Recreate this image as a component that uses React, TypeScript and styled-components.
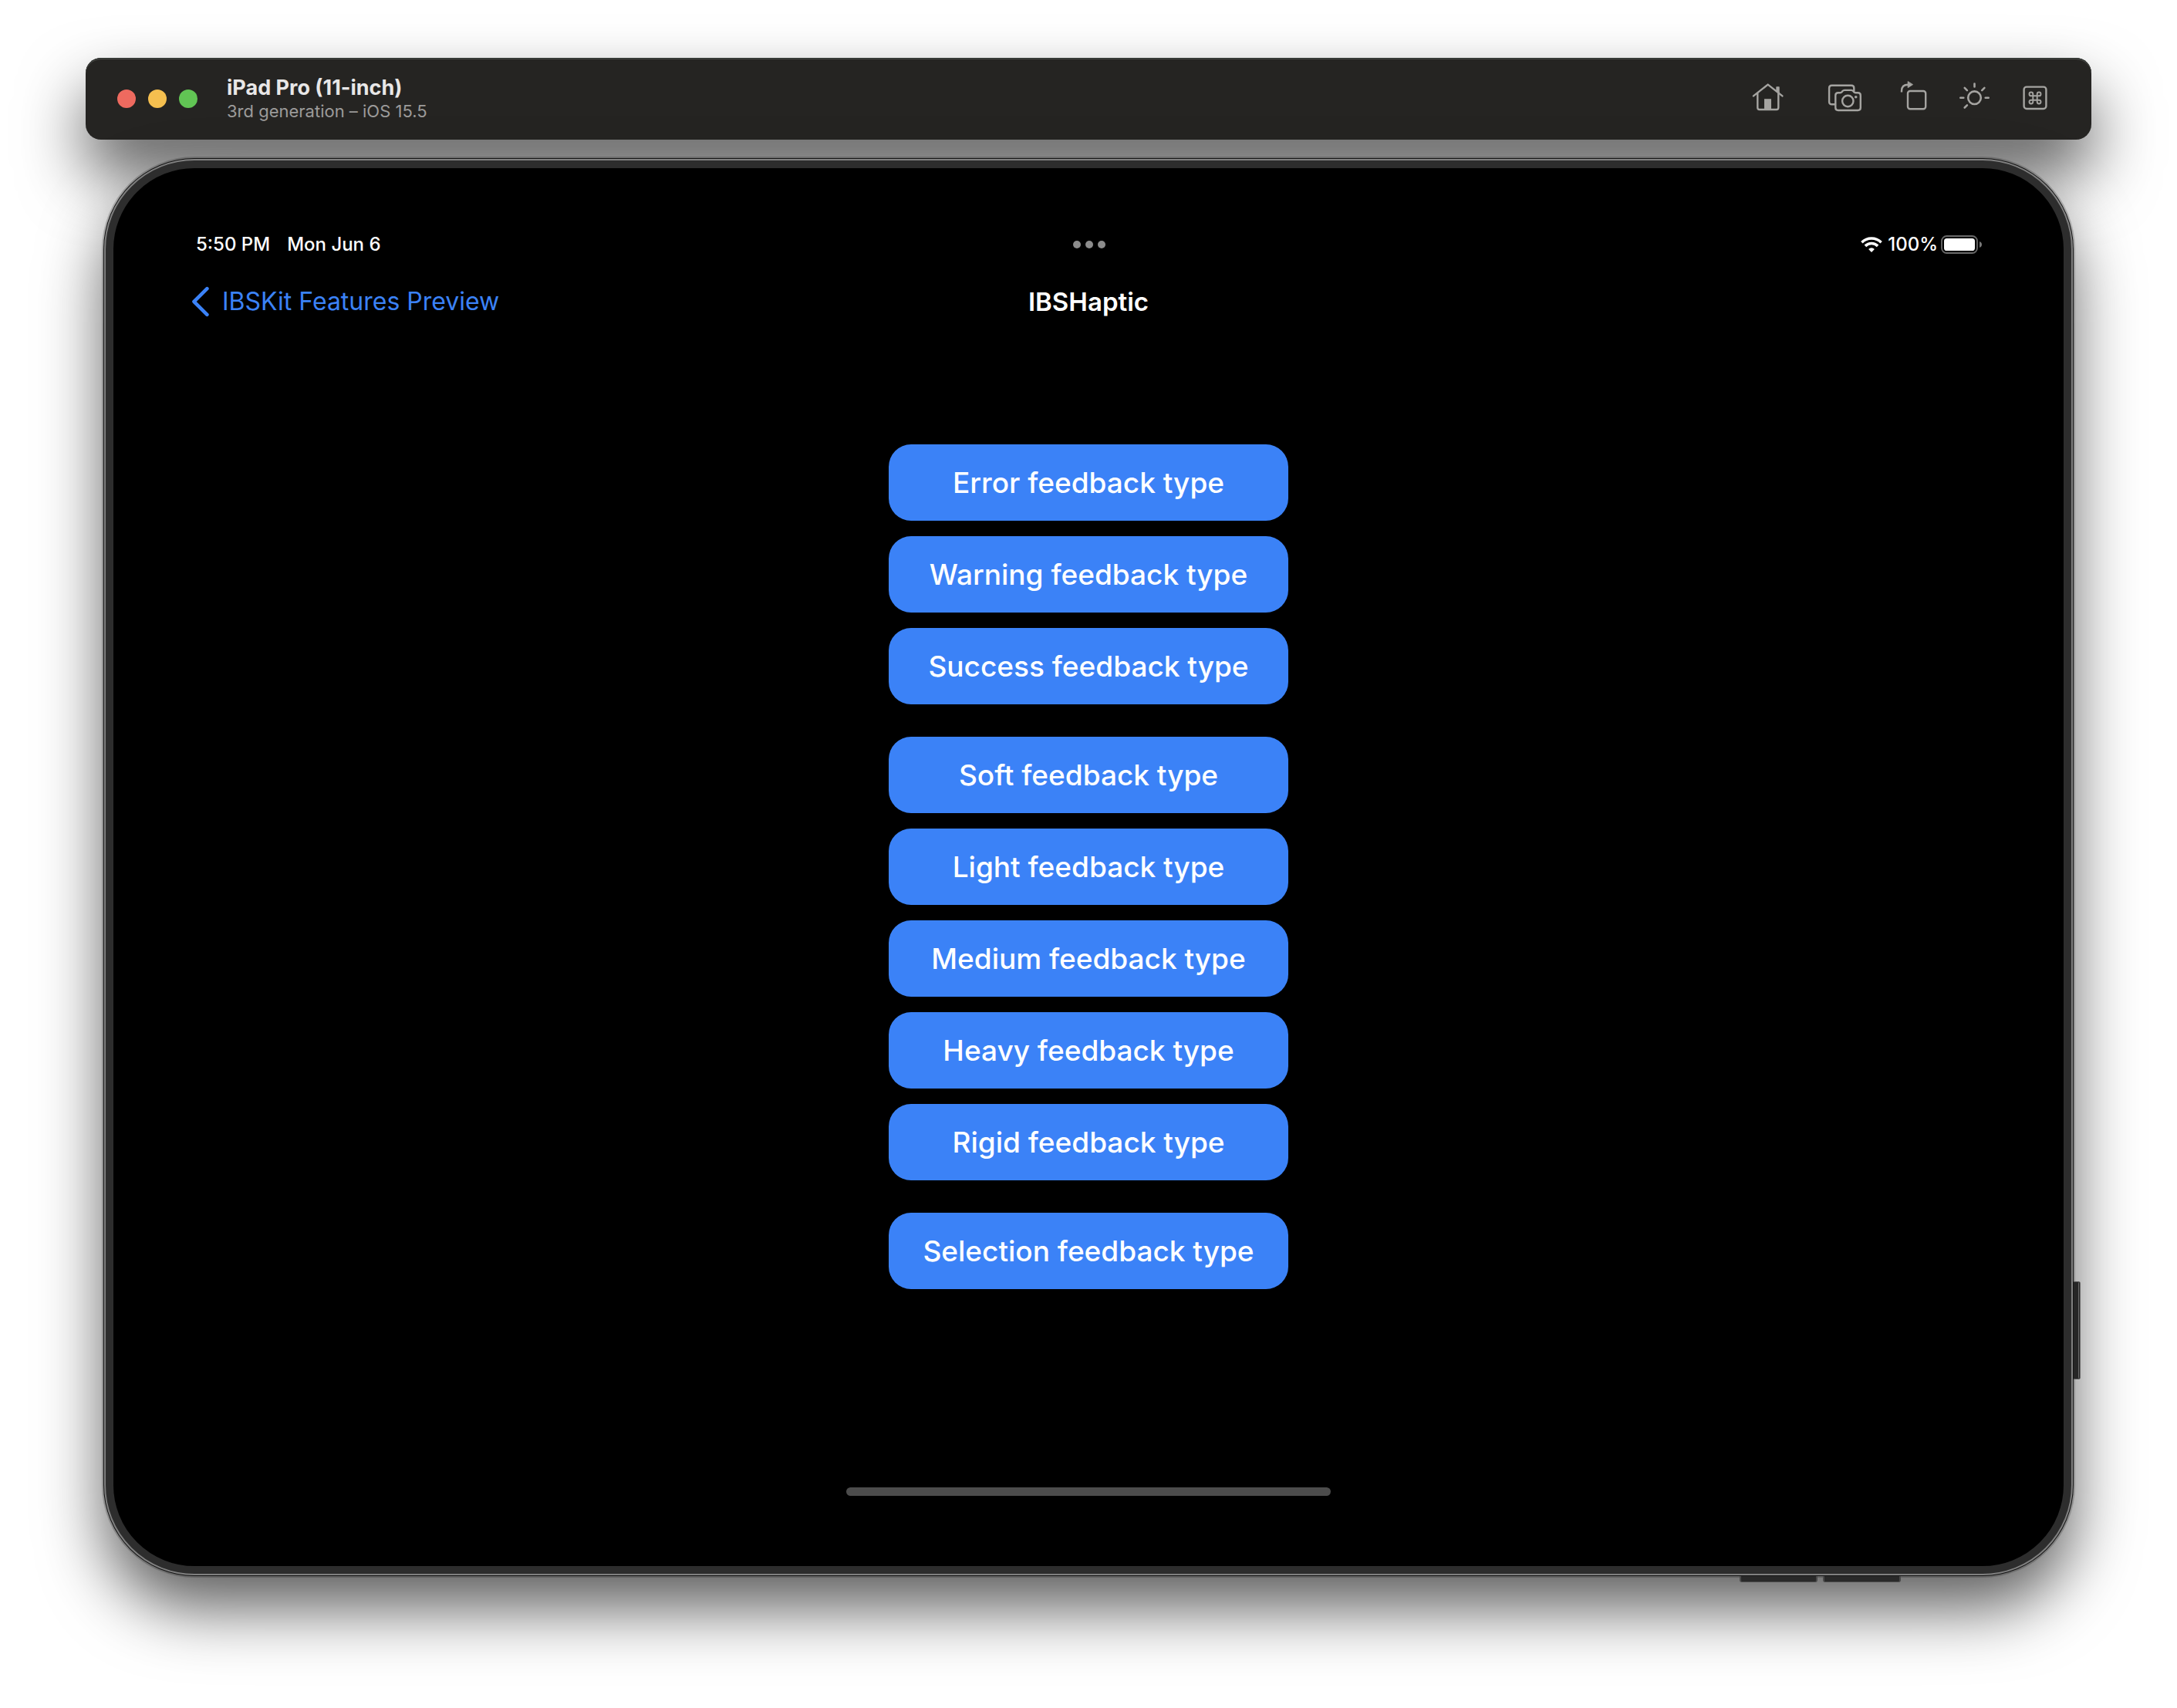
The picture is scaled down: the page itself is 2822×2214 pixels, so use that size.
import React from "react";
import styled, { createGlobalStyle } from "styled-components";

const GlobalStyle = createGlobalStyle`
  *, *::before, *::after { box-sizing: border-box; }
  body { margin: 0; background: #ffffff; }
  button { font: inherit; border: 0; padding: 0; cursor: pointer; }
`;

const Page = styled.main`
  min-height: 100vh;
  padding: 75px 111px 160px;
  overflow: hidden;
  background: #ffffff;
  font-family: Inter, "Liberation Sans", sans-serif;
`;

const windowShadow = "0 44px 84px rgba(0, 0, 0, 0.64)";

const Toolbar = styled.header`
  display: flex;
  align-items: center;
  height: 106px;
  padding: 0 51px 0 41px;
  border-radius: 20px;
  background: #252422;
  box-shadow: inset 0 1px 0 #2a2f2c, inset 0 2px 0 #4a4a47, ${windowShadow};
`;

const WindowControls = styled.div`
  display: flex;
  gap: 16px;
  margin-right: 38px;
`;

const WindowControl = styled.button<{ $color: string }>`
  width: 24px;
  height: 24px;
  border-radius: 50%;
  background: ${(p) => p.$color};
`;

const WindowTitle = styled.div`
  flex: 1;
`;

const DeviceName = styled.h1`
  margin: 0;
  color: #e8e7e7;
  font-size: 27px;
  font-weight: 700;
  line-height: 32px;
`;

const DeviceVersion = styled.p`
  margin: 0;
  color: #9c9b9a;
  font-size: 22px;
  line-height: 28px;
`;

const Tools = styled.div`
  display: flex;
  align-items: center;
  gap: 32px;
  padding-bottom: 4px;
`;

const Tool = styled.button<{ $width: number }>`
  display: flex;
  justify-content: center;
  width: ${(p) => p.$width}px;
  color: #a5a4a1;
  background: none;
`;

const Device = styled.section`
  position: relative;
  display: flex;
  flex-direction: column;
  margin: 27px 26px 0;
  padding: 85px 102px 91px;
  border: 10px solid #2d2d2d;
  border-radius: 115px;
  background: #000000;
  box-shadow: 0 0 0 2px #808080, 0 0 0 3px #141414,
    0 0 0 5px rgba(0, 0, 0, 0.18), ${windowShadow};
`;

const SideKey = styled.span`
  position: absolute;
  right: -22px;
  bottom: 242px;
  width: 9px;
  height: 127px;
  border: 1px solid #555555;
  border-left: 0;
  border-right: 3px double #6a6a6a;
  border-radius: 0 3px 3px 0;
  background: #262626;
`;

const BottomKey = styled.span<{ $right: number }>`
  position: absolute;
  right: ${(p) => p.$right}px;
  bottom: -21px;
  width: 101px;
  height: 8px;
  border: 2px solid #4a4a4a;
  border-top: 0;
  border-bottom: 1px solid #4a4a4a;
  border-radius: 0 0 3px 3px;
  background: #292929;
`;

const StatusBar = styled.div`
  display: grid;
  grid-template-columns: 1fr auto 1fr;
  align-items: center;
  height: 28px;
  padding: 0 3px 0 5px;
  color: #ffffff;
  font-size: 24px;
  font-weight: 500;
  line-height: 28px;
`;

const StatusTime = styled.div`
  display: flex;
  gap: 22px;
`;

const Multitask = styled.button`
  display: flex;
  gap: 6px;
  background: none;
`;

const Dot = styled.span`
  width: 10px;
  height: 10px;
  border-radius: 50%;
  background: #8c8c8c;
`;

const StatusIcons = styled.div`
  display: flex;
  align-items: center;
  justify-content: flex-end;
`;

const BatteryLevel = styled.span`
  margin: 0 4px 0 7px;
`;

const NavBar = styled.nav`
  display: grid;
  grid-template-columns: 1fr auto 1fr;
  align-items: center;
  height: 48px;
  margin-top: 36px;
  font-size: 32px;
  line-height: 40px;
`;

const BackLink = styled.a`
  display: flex;
  align-items: center;
  gap: 15px;
  color: #3b82f7;
  text-decoration: none;
`;

const NavTitle = styled.h2`
  margin: 0;
  color: #ffffff;
  font-size: 33px;
  font-weight: 600;
`;

const Groups = styled.div`
  display: flex;
  flex-direction: column;
  align-self: center;
  gap: 42px;
  margin-top: 161px;
`;

const Group = styled.div`
  display: flex;
  flex-direction: column;
  gap: 20px;
`;

const FeedbackButton = styled.button`
  width: 518px;
  height: 99px;
  border-radius: 29px;
  color: #ffffff;
  background: #3b82f7;
  && {
    font-size: 37px;
    font-weight: 500;
    line-height: 48px;
  }
`;

const HomeIndicator = styled.div`
  align-self: center;
  width: 628px;
  height: 11px;
  margin-top: 257px;
  border-radius: 6px;
  background: #4c4c4c;
`;

const stroke = {
  fill: "none",
  stroke: "currentColor",
  strokeWidth: 2.4,
  strokeLinecap: "round" as const,
  strokeLinejoin: "round" as const,
};

const HomeIcon = () => (
  <svg width="44" height="44" viewBox="0 0 44 44" {...stroke}>
    <path d="M3 20.4 L21.7 5.6 L40.4 20.4" />
    <path d="M8.3 17v18.6q0 2.4 2.4 2.4h22.2q2.4 0 2.4-2.4V17" />
    <path d="M33 14V9h3v7.500z" fill="currentColor" strokeWidth="1.400" />
    <path d="M17 38V24.200h9V38z" fill="currentColor" stroke="none" />
  </svg>
);

const CameraIcon = () => (
  <svg width="48" height="44" viewBox="0 0 48 44" {...stroke}>
    <path d="M11 31.300H6.500q-3.400 0-3.400-3.400V10.200q0-3.400 3.400-3.400h25.400q3.400 0 3.400 3.400v4" />
    <path d="M14.700 16.300h2.600q1.400 0 2.200-1l1-1.200q1-1.200 2.500-1.200h8.700q1.500 0 2.500 1.200l1 1.200q.8 1 2.200 1h3q3.400 0 3.400 3.400v15.900q0 3.400-3.400 3.400H14.700q-3.400 0-3.400-3.400V19.700q0-3.400 3.400-3.400z" />
    <circle cx="27.300" cy="27" r="7.200" />
    <circle cx="37.700" cy="21.700" r="1.800" fill="currentColor" stroke="none" />
  </svg>
);

const RotateIcon = () => (
  <svg width="40" height="44" viewBox="0 0 40 44" {...stroke}>
    <rect x="13" y="14" width="23.200" height="23.200" rx="3" />
    <path d="M5 15.500V14Q5 5.800 13.500 5.800" strokeLinecap="butt" />
    <path d="M13.200 2v7.600l6-3.800z" fill="currentColor" strokeWidth="1" />
  </svg>
);

const BrightnessIcon = () => (
  <svg width="44" height="44" viewBox="0 0 44 44" {...stroke} strokeWidth="2.600">
    <circle cx="21.500" cy="22.700" r="8.300" />
    <path d="M21.500 4.500v4M3.300 22.700h4M35.700 22.700h4M8.700 9.900l3.200 3.200M31.200 13.100l3.200-3.200M8.700 35.500l3.200-3.200" />
  </svg>
);

const KeyboardIcon = () => (
  <svg width="40" height="44" viewBox="0 0 40 44" {...stroke}>
    <rect x="5.600" y="8.600" width="28.800" height="28.400" rx="3.400" />
    <path
      d="M17.300 20.300h5.400v5.400h-5.400zM17.300 20.300h-2.400a2.400 2.400 0 1 1 2.400-2.400zM22.700 20.300h2.400a2.400 2.400 0 1 0-2.400-2.400zM17.300 25.700h-2.400a2.400 2.400 0 1 0 2.400 2.400zM22.700 25.700h2.400a2.400 2.400 0 1 1-2.400 2.400z"
      strokeWidth="1.900"
    />
  </svg>
);

const ChevronIcon = () => (
  <svg width="24" height="40" viewBox="0 0 24 40" {...stroke} strokeWidth="4.600">
    <path d="M19.400 3.200 L2.500 20 L19.400 36.800" />
  </svg>
);

const WifiIcon = () => (
  <svg width="28" height="20" viewBox="0 0 28 20" fill="none" stroke="currentColor">
    <path d="M1.400 7.200a18 18 0 0 1 25.200 0" strokeWidth="3.600" />
    <path d="M5.900 11.900a11.500 11.500 0 0 1 16.200 0" strokeWidth="3.600" />
    <path d="M14 20l-3.900-4.100a5.600 5.600 0 0 1 7.800 0z" fill="currentColor" stroke="none" />
  </svg>
);

const BatteryIcon = () => (
  <svg width="54" height="24" viewBox="0 0 54 24">
    <rect x="1" y="1" width="46" height="22" rx="6.500" fill="none" stroke="#6a6a6a" strokeWidth="1.800" />
    <rect x="4" y="4" width="40" height="16" rx="3.600" fill="#ffffff" />
    <path d="M50 8q3 1.200 3 4t-3 4z" fill="#777777" />
  </svg>
);

const tools = [
  { label: "Home", width: 72, Icon: HomeIcon },
  { label: "Screenshot", width: 64, Icon: CameraIcon },
  { label: "Rotate", width: 48, Icon: RotateIcon },
  { label: "Appearance", width: 48, Icon: BrightnessIcon },
  { label: "Capture keyboard", width: 44, Icon: KeyboardIcon },
];

const windowControls = [
  { label: "Close", color: "#ee6a5f" },
  { label: "Minimize", color: "#f5bf4f" },
  { label: "Zoom", color: "#61c554" },
];

const feedbackGroups = [
  ["Error", "Warning", "Success"],
  ["Soft", "Light", "Medium", "Heavy", "Rigid"],
  ["Selection"],
];

export default function App() {
  return (
    <>
      <GlobalStyle />
      <Page>
        <Toolbar>
          <WindowControls>
            {windowControls.map(({ label, color }) => (
              <WindowControl key={label} aria-label={label} $color={color} />
            ))}
          </WindowControls>
          <WindowTitle>
            <DeviceName>iPad Pro (11-inch)</DeviceName>
            <DeviceVersion>3rd generation – iOS 15.5</DeviceVersion>
          </WindowTitle>
          <Tools>
            {tools.map(({ label, width, Icon }) => (
              <Tool key={label} aria-label={label} $width={width}>
                <Icon />
              </Tool>
            ))}
          </Tools>
        </Toolbar>

        <Device>
          <StatusBar>
            <StatusTime>
              <span>5:50 PM</span>
              <span>Mon Jun 6</span>
            </StatusTime>
            <Multitask aria-label="Multitasking">
              <Dot />
              <Dot />
              <Dot />
            </Multitask>
            <StatusIcons>
              <WifiIcon />
              <BatteryLevel>100%</BatteryLevel>
              <BatteryIcon />
            </StatusIcons>
          </StatusBar>

          <NavBar>
            <BackLink href="#">
              <ChevronIcon />
              IBSKit Features Preview
            </BackLink>
            <NavTitle>IBSHaptic</NavTitle>
          </NavBar>

          <Groups>
            {feedbackGroups.map((names) => (
              <Group key={names[0]}>
                {names.map((name) => (
                  <FeedbackButton key={name}>{name} feedback type</FeedbackButton>
                ))}
              </Group>
            ))}
          </Groups>

          <HomeIndicator />

          <SideKey />
          <BottomKey $right={319} />
          <BottomKey $right={211} />
        </Device>
      </Page>
    </>
  );
}
